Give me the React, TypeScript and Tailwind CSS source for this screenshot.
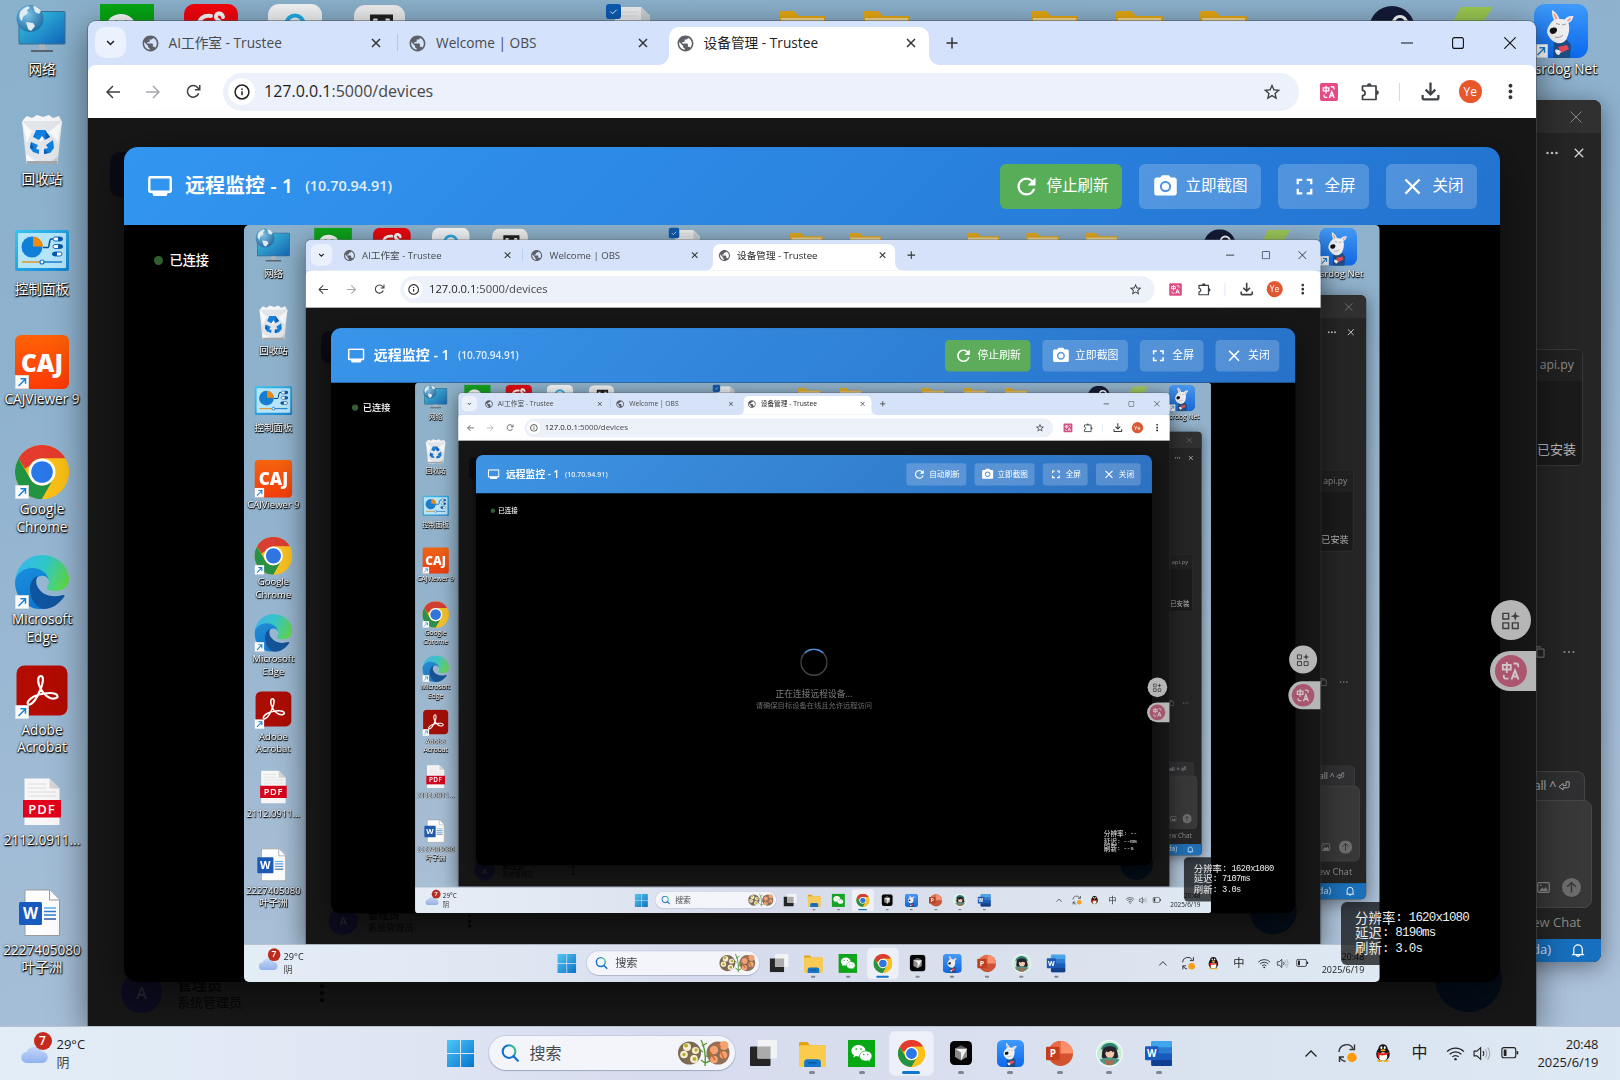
import type { ReactNode } from "react";
import {
  MdPublic,
  MdRefresh,
  MdCameraAlt,
  MdFullscreen,
  MdClose,
  MdStarBorder,
  MdOutlineFileDownload,
  MdMoreVert,
} from "react-icons/md";

/* ---------- app artwork ---------- */

function ChromeLogo({ className }: { className?: string }) {
  return (
    <svg viewBox="0 0 48 48" className={className}>
      <circle cx="24" cy="24" r="24" fill="#fbc116" />
      <path d="M3.2 12 A24 24 0 0 1 44.8 12 H24 A12 12 0 0 0 13.6 18 L9 21Z" fill="#e33b2e" />
      <path d="M3.2 12 A24 24 0 0 0 24 48 L34.4 30 A12 12 0 0 1 13.6 30Z" fill="#229342" />
      <path d="M44.8 12 A24 24 0 0 1 24 48 L34.4 30 A12 12 0 0 0 34.4 18 L24 12Z" fill="#fbc116" />
      <circle cx="24" cy="24" r="12" fill="#fff" />
      <circle cx="24" cy="24" r="9.6" fill="#2a77ea" />
    </svg>
  );
}

function EdgeLogo({ className }: { className?: string }) {
  return (
    <svg viewBox="0 0 54 54" className={className}>
      <defs>
        <linearGradient id="edgeTop" x1="0" y1="0.3" x2="1" y2="0.6">
          <stop offset="0" stopColor="#35b7f0" />
          <stop offset="0.5" stopColor="#2fc6c8" />
          <stop offset="1" stopColor="#5fdc4a" />
        </linearGradient>
        <linearGradient id="edgeMid" x1="0" y1="0" x2="0.5" y2="1">
          <stop offset="0" stopColor="#1c8fdc" />
          <stop offset="1" stopColor="#0a78d2" />
        </linearGradient>
      </defs>
      <path d="M0 27C1 11 13 0 27 0c16 0 27 12 27 24 0 8-6 12-13 12-6 0-9-1-9-3 0-2 2-3 2-6 0-4-4-7-8-7C17 14 6 14 0 27z" fill="url(#edgeTop)" />
      <path d="M0 27c1-9 9-14 17-14 9 0 17 6 17 14 0-4-4-7-8-6-8 1-11 10-8 18 2 7 6 12 12 15-2 .4-4 0-6 0C10 53 0 41 0 27z" fill="url(#edgeMid)" />
      <path d="M15 34c0-6 3-12 8-13-3 4-2 9 1 13 4 6 13 9 24 6 2 0 2 1 1 2-5 7-12 12-20 12C21 53 15 44 15 34z" fill="#0f549e" />
    </svg>
  );
}

function WordTile({ className }: { className?: string }) {
  return (
    <svg viewBox="0 0 26 26" className={className}>
      <rect x="6" y="1" width="20" height="24" rx="1.5" fill="#2b7cd3" />
      <rect x="6" y="1" width="20" height="6" rx="1.5" fill="#41a5ee" />
      <rect x="6" y="13" width="20" height="6" fill="#185abd" />
      <rect x="6" y="19" width="20" height="6" rx="1.5" fill="#103f91" />
      <rect x="0" y="6" width="13" height="13.5" rx="1.2" fill="#185abd" />
      <text x="6.5" y="16" textAnchor="middle" fontSize="9.5" fontWeight="700" fill="#fff">W</text>
    </svg>
  );
}

function PowerPointTile({ className }: { className?: string }) {
  return (
    <svg viewBox="0 0 26 26" className={className}>
      <circle cx="14" cy="13" r="12" fill="#d35230" />
      <path d="M14 1a12 12 0 0 1 12 12H14z" fill="#ff8f6b" />
      <path d="M14 1a12 12 0 0 0-12 12h12z" fill="#ed6c47" />
      <rect x="0" y="6.5" width="13" height="13" rx="1.2" fill="#c43e1c" />
      <text x="6.5" y="16.4" textAnchor="middle" fontSize="9.5" fontWeight="700" fill="#fff">P</text>
    </svg>
  );
}

function WeChatTile({ className }: { className?: string }) {
  return (
    <svg viewBox="0 0 54 54" className={className}>
      <rect width="54" height="54" fill="#06a814" />
      <path d="M21 10c-8 0-14 5-14 11.500 0 4 2 7 5 9l-1.500 4.500 5.500-3c2 .6 3 .8 5 .8 8 0 14-5 14-11.300S29 10 21 10z" fill="#fff" />
      <path d="M35.500 22c-7 0-12.500 4.500-12.500 10s5.500 10 12.500 10c1.500 0 3-.3 4.300-.7l4.700 2.600-1.200-4c2.900-2 4.700-4.700 4.700-7.900 0-5.500-5.500-10-12.500-10z" fill="#fff" stroke="#06a814" strokeWidth="1.300" />
      <circle cx="16.500" cy="18" r="1.700" fill="#06a814" />
      <circle cx="26" cy="18" r="1.700" fill="#06a814" />
      <circle cx="31.500" cy="29" r="1.400" fill="#06a814" />
      <circle cx="39.500" cy="29" r="1.400" fill="#06a814" />
    </svg>
  );
}

function DogTile({ className }: { className?: string }) {
  return (
    <svg viewBox="0 0 54 54" className={className}>
      <defs>
        <linearGradient id="dogBg" x1="0" y1="0" x2="0" y2="1">
          <stop offset="0" stopColor="#3f9bfb" />
          <stop offset="1" stopColor="#0b68ec" />
        </linearGradient>
      </defs>
      <rect width="54" height="54" rx="11" fill="url(#dogBg)" />
      <path d="M19 54l1-17 13-1 4 5-1 13z" fill="#1d4f86" />
      <path d="M18 6c4 2 6 5 7.500 9 2 0 3 0 5 .6 2.500-3 5-4 9-3.600-1 4-3 6-5 7 1.500 6 .5 11-2 16-3 5-8 5-12 3-3-1.500-6-5-7.500-9.500C13 23 17 18 20 16c-1.500-3-2-6-2-10z" fill="#f1f1f3" />
      <path d="M19.500 8.500c2 1.500 3.500 4 4 6.500l-2 .5c-1-2-2-4-2-7zM37.500 13.500c-2 .3-3.500 1.500-4.500 3l1 1.500c1.500-1 2.800-2.500 3.500-4.500z" fill="#f2a28a" />
      <path d="M20 23.500c2-.5 3.500 1 3 3s-2.500 3.500-4.500 3.500-3.500-3-2.500-4.500 2-1.700 4-2z" fill="#111" />
      <path d="M22 19.500l4 1M28 21l4-1M21 33c3 1 6 0 8-2" stroke="#9aa0aa" strokeWidth="1" fill="none" />
      <path d="M24 43l9-2 2 4-8 4z" fill="#e94b56" />
      <path d="M21 46c2-1 5 0 6 2l-2 3c-2 0-4-2-4-5z" fill="#f1f1f3" />
    </svg>
  );
}

function FolderTile({ className }: { className?: string }) {
  return (
    <svg viewBox="0 0 26 26" className={className}>
      <path d="M0 3.500A1.500 1.500 0 0 1 1.500 2H8l2.500 3H24a2 2 0 0 1 2 2v4H0z" fill="#e0a30d" />
      <rect x="0" y="5" width="26" height="21" rx="1.800" fill="#fbcb4c" />
      <path d="M5 26v-4.500A3 3 0 0 1 8 18.500h10a3 3 0 0 1 3 3V26z" fill="#1177cc" />
      <path d="M9 22h8" stroke="#0a4f93" strokeWidth="1.200" />
    </svg>
  );
}

function CursorTile({ className }: { className?: string }) {
  return (
    <svg viewBox="0 0 24 24" className={className}>
      <rect x="1" width="22" height="24" rx="4.500" fill="#050505" />
      <path d="M12 4.500l6 3.300v8.200l-6 3.500-6-3.500V7.800z" fill="#8b8b8b" />
      <path d="M12 4.500l6 3.300-6 3-6-3z" fill="#5c5c5c" />
      <path d="M6 7.800h12l-6 11.700v-8z" fill="#f0f0f0" />
    </svg>
  );
}

function AvatarTile({ className }: { className?: string }) {
  return (
    <svg viewBox="0 0 26 26" className={className}>
      <circle cx="13" cy="13" r="13" fill="#f5faf6" />
      <circle cx="13" cy="13" r="11.800" fill="#c7ead3" />
      <path d="M4.500 9.500c1-5 6-7.500 10-6.500 4 .5 6.500 3 7 6.500L13 7.500z" fill="#2b8070" />
      <path d="M6 10.500c1-3.500 4-4.500 7.500-4.500S20 7.500 20.500 11.500l1 5-3 2H8l-2.500-2z" fill="#26212b" />
      <path d="M9 11c2-1 6-1 8.500 0 .5 3-.5 6-4.200 6.500C10 17 8.500 14 9 11z" fill="#f3c9ad" />
      <path d="M8 9l10-.5-1.500 3.500-2-2-3 2-1.500-1.500L9 13z" fill="#26212b" />
      <path d="M3.500 19c4-3 15-3 19 0-2 3-5 5.300-9.500 5.300S5.500 22 3.500 19z" fill="#4f9488" />
      <path d="M8 18.500l5 1.500 5-1.500-2 5.500h-6z" fill="#a86d4c" />
    </svg>
  );
}

function NetworkTile() {
  return (
    <svg viewBox="0 0 54 54" className="size-[54px]">
      <defs>
        <linearGradient id="netScreen" x1="0" y1="0" x2="1" y2="1">
          <stop offset="0" stopColor="#38c6e0" />
          <stop offset="1" stopColor="#1168bd" />
        </linearGradient>
        <radialGradient id="netGlobe" cx="0.4" cy="0.35" r="0.7">
          <stop offset="0" stopColor="#7cc3e8" />
          <stop offset="1" stopColor="#1f6a9f" />
        </radialGradient>
      </defs>
      <rect x="3.500" y="7" width="47" height="33.500" rx="1.500" fill="#3b6d8c" />
      <rect x="4.500" y="8" width="45" height="31.500" fill="url(#netScreen)" />
      <path d="M24 40.500h6v6h-6z" fill="#a9b3bb" />
      <path d="M16 46h22v2H16z" fill="#59646d" />
      <circle cx="15" cy="14.500" r="13.500" fill="url(#netGlobe)" />
      <path d="M5 8c2-3 5-5 8-6l2 2-3 2 1 3-5 4-1 4c-3-2-3-6-2-9zM18 2c3 0 6 2 8 5l-2 3-4-2zM11 18l7 1 2 3-4 5-3-2z" fill="#dfebf0" />
    </svg>
  );
}

function RecycleTile() {
  return (
    <svg viewBox="0 0 54 54" className="size-[54px]">
      <path d="M8 6l4-4 5 2 5-3 6 2 6-2 4 3 6-2 3 6-1 3H8z" fill="#f3f5f7" />
      <path d="M7 7h40l-4.500 43h-31z" fill="#e2e5e9" />
      <path d="M7 7l10 10-5 12zM47 7L34 18l9 10zM17 17l17 1-8 10zM11 40l14 10h-13z" fill="#f8f9fb" />
      <path d="M42.800 42l-9 8h8.500z" fill="#c8ccd2" />
      <path d="M11.500 47h31l-.3 3h-30.400z" fill="#a3a8ae" />
      <path d="M21 16h9l5 7-5 3-3-4-3 4-6-3zM16 28l7 3-2 4 3 .500v4.500l-6-2-3-4zM38 26l1 8-4 5-6 1v-5l4-1-2-3z" fill="#1080e0" />
      <path d="M30 16l5 7-4 2zM16 28l3 7-4-1zM29 40v-5l4 4z" fill="#0b5cb0" />
    </svg>
  );
}

function ControlPanelTile() {
  return (
    <svg viewBox="0 0 54 54" className="size-[54px]">
      <defs>
        <linearGradient id="cpFrame" x1="0" y1="0" x2="1" y2="1">
          <stop offset="0" stopColor="#36c4f2" />
          <stop offset="1" stopColor="#1484d4" />
        </linearGradient>
      </defs>
      <rect x="0" y="6" width="54" height="41" rx="2" fill="url(#cpFrame)" />
      <rect x="3" y="9" width="48" height="35" rx="1" fill="#b4e6fb" />
      <circle cx="17" cy="23" r="10.500" fill="#0f7fd8" />
      <path d="M18 12.500A10.500 10.500 0 0 1 28 22.500H18z" fill="#f28a0a" />
      <path d="M28 23.500h5c1.500 0 1-8 3-8.500h3" stroke="#0b4f93" strokeWidth="1.500" fill="none" />
      <g stroke="#0f6fc4" fill="#fff">
        <rect x="38" y="13" width="9" height="4" rx="2" />
        <rect x="38" y="20.500" width="9" height="4" rx="2" />
        <rect x="38" y="28" width="9" height="4" rx="2" />
      </g>
      <path d="M43 13h3a2 2 0 0 1 0 4h-3zM43 20.500h3a2 2 0 0 1 0 4h-3zM42 28h-3a2 2 0 0 0 0 4h3z" fill="#0a5aa8" />
      <path d="M7 38h20" stroke="#e48a17" strokeWidth="1.400" />
      <path d="M27 38h20" stroke="#1176cf" strokeWidth="1.400" />
      <circle cx="27" cy="38" r="2" fill="#fff" stroke="#1176cf" strokeWidth="1.200" />
    </svg>
  );
}

function CajTile() {
  return (
    <svg viewBox="0 0 54 54" className="size-[54px]">
      <defs>
        <linearGradient id="caj" x1="0" y1="0" x2="0" y2="1">
          <stop offset="0" stopColor="#ff6206" />
          <stop offset="1" stopColor="#fd3a06" />
        </linearGradient>
      </defs>
      <rect width="54" height="54" rx="6" fill="url(#caj)" />
      <text x="27" y="36.500" textAnchor="middle" fontSize="25" fontWeight="800" fill="#fff" textLength="42" lengthAdjust="spacingAndGlyphs">CAJ</text>
    </svg>
  );
}

function AcrobatTile() {
  return (
    <svg viewBox="0 0 54 54" className="size-[54px]">
      <rect x="1.500" y="0.500" width="51" height="50" rx="8" fill="#b30b00" />
      <path
        d="M26 11c-3 0-3.500 4-2 9 1.500 5 6 11 11 13 4 1.500 8 0 7.500-2-.5-3-7-3.500-13-2.500-7 1-14 4-16.500 8-1 2 0 3.500 2 3 4-1.500 8-9 10.500-15 2-5 4-13 .5-13.500z"
        fill="none"
        stroke="#fff"
        strokeWidth="2.200"
      />
    </svg>
  );
}

function PdfTile() {
  return (
    <svg viewBox="0 0 54 54" className="size-[54px]">
      <path d="M9.500 3.500h25l10 10V50h-35z" fill="#f7f7f7" />
      <path d="M34.500 3.500l10 10h-10z" fill="#d5d5d5" />
      <path d="M13 9h18M13 13h18M13 17h28M13 21h28" stroke="#dcdcdc" />
      <rect x="8" y="25" width="38" height="17.500" fill="#e3001b" />
      <text x="27" y="38.500" textAnchor="middle" fontSize="13" fontWeight="600" letterSpacing="1" fill="#fff">PDF</text>
    </svg>
  );
}

function WordDocTile() {
  return (
    <svg viewBox="0 0 54 54" className="size-[54px]">
      <path d="M10 4h24.500l10 10v35.500H10z" fill="#fdfdfd" stroke="#9b9b9b" />
      <path d="M34.500 4v10h10" fill="#fff" stroke="#9b9b9b" />
      <path d="M29 22h12" stroke="#41a5ee" strokeWidth="1.300" />
      <path d="M29 25.500h12M29 29h12" stroke="#2b7cd3" strokeWidth="1.300" />
      <path d="M29 33h12" stroke="#103f91" strokeWidth="1.300" />
      <rect x="4" y="16" width="23" height="23" rx="1.500" fill="#185abd" />
      <text x="15.500" y="33" textAnchor="middle" fontSize="15.500" fontWeight="700" fill="#fff">W</text>
    </svg>
  );
}

function ShortcutArrow() {
  return (
    <svg viewBox="0 0 14 14" className="absolute bottom-0 left-0 size-[14px]">
      <rect x="0.250" y="0.250" width="13.500" height="13.500" fill="#fdfdfd" stroke="#cfd6dd" strokeWidth="0.500" />
      <path d="M3.500 11l6.500-6.500M5.500 3.800h5v5" stroke="#1683d8" strokeWidth="1.500" fill="none" />
    </svg>
  );
}

function TranslateGlyph({ className, color }: { className?: string; color: string }) {
  return (
    <svg viewBox="0 0 20 20" className={className} fill="none" stroke={color} strokeWidth="1.800">
      <path d="M1.800 4h8v4.500h-8zM5.800 1v11" />
      <path d="M12.500 2.500h2.500q2.300 0 2.300 2.300v1.500M2.800 14v1.500q0 2.200 2.200 2.200h2.500" />
      <path d="M10.500 18.500l3.500-9 3.500 9M11.700 15.500h4.600" strokeWidth="2" />
    </svg>
  );
}

/* ---------- desktop layer ---------- */

const labelShadow = "[text-shadow:0_1px_2px_#000,1px_1px_1px_rgba(0,0,0,.9),0_0_2px_rgba(0,0,0,.6)]";

const desktopItems: { label: ReactNode; icon: ReactNode; shortcut?: boolean }[] = [
  { label: "网络", icon: <NetworkTile /> },
  { label: "回收站", icon: <RecycleTile /> },
  { label: "控制面板", icon: <ControlPanelTile /> },
  { label: "CAJViewer 9", icon: <CajTile />, shortcut: true },
  { label: <>Google<br />Chrome</>, icon: <ChromeLogo className="size-[54px]" />, shortcut: true },
  { label: <>Microsoft<br />Edge</>, icon: <EdgeLogo className="size-[54px]" />, shortcut: true },
  { label: <>Adobe<br />Acrobat</>, icon: <AcrobatTile />, shortcut: true },
  { label: "2112.0911...", icon: <PdfTile /> },
  { label: <>2227405080<br />叶子洲</>, icon: <WordDocTile /> },
];

function DesktopColumn() {
  return (
    <div className="absolute top-[4px] left-0 flex w-[84px] flex-col">
      {desktopItems.map((item, i) => (
        <div key={i} className="flex h-[110.200px] flex-col items-center">
          <div className="relative size-[54px]">
            {item.icon}
            {item.shortcut && <ShortcutArrow />}
          </div>
          <div className={`mt-[1.500px] text-center text-[13.600px] leading-[17.300px] whitespace-nowrap text-white ${labelShadow}`}>
            {item.label}
          </div>
        </div>
      ))}
    </div>
  );
}

function HalfFolder({ className }: { className: string }) {
  return (
    <svg viewBox="0 0 47 20" className={className}>
      <path d="M0 2a2 2 0 0 1 2-2h13l5 5h25a2 2 0 0 1 2 2v13H0z" fill="#e9ab13" />
      <path d="M2 7h43v13H2z" fill="#f6dc94" />
    </svg>
  );
}

function TopRow() {
  return (
    <>
      <WeChatTile className="absolute top-[4px] left-[100px] size-[54px]" />
      <svg viewBox="0 0 54 54" className="absolute top-[4px] left-[184px] size-[54px]">
        <rect width="54" height="54" rx="10" fill="#f6060c" />
        <path d="M27 12c-8-1-12 3-12 9M39 13c-1-4-6-5-7-1-1 5 6 4 5 9" stroke="#fff" strokeWidth="4" fill="none" strokeLinecap="round" />
      </svg>
      <svg viewBox="0 0 54 54" className="absolute top-[4px] left-[268px] size-[54px]">
        <rect width="54" height="54" rx="11" fill="#f4f6f8" />
        <circle cx="27" cy="20" r="8.500" fill="none" stroke="#23b1ee" strokeWidth="4" />
      </svg>
      <svg viewBox="0 0 54 54" className="absolute top-[5px] left-[353px] size-[54px]">
        <rect x="1" width="51" height="52" rx="11" fill="#efefef" />
        <path d="M17 9.500h23v8h-2.500l-1-4h-4v20h-8v-20h-4l-1 4H17z" fill="#222" />
      </svg>
      <svg viewBox="0 0 36 40" className="absolute top-[7px] left-[615px] h-[40px] w-[36px]">
        <path d="M0 0h26l9 9v31H0z" fill="#eef0f1" />
        <path d="M26 0l9 9v4h-9z" fill="#cfd3d6" />
        <path d="M5 5h18M5 9h18" stroke="#dcdfe1" />
      </svg>
      <span className="absolute top-[4px] left-[606px] flex h-[15px] w-[14.500px] items-center justify-center rounded-[3px] bg-[#0a5cb4]">
        <svg viewBox="0 0 10 10" className="size-[9px]" fill="none" stroke="#fff">
          <path d="M1.500 5l2.500 2.500L8.500 3" />
        </svg>
      </span>
      <HalfFolder className="absolute top-[11px] left-[779px] h-[20px] w-[47px]" />
      <HalfFolder className="absolute top-[11px] left-[863px] h-[20px] w-[47px]" />
      <HalfFolder className="absolute top-[11px] left-[1031px] h-[20px] w-[47px]" />
      <HalfFolder className="absolute top-[11px] left-[1116px] h-[20px] w-[47px]" />
      <HalfFolder className="absolute top-[11px] left-[1200px] h-[20px] w-[47px]" />
      <svg viewBox="0 0 46 46" className="absolute top-[6px] left-[1369px] size-[46px]">
        <circle cx="23" cy="23" r="23" fill="#141b38" />
        <circle cx="31" cy="17" r="6.500" fill="none" stroke="#fff" strokeWidth="3" />
      </svg>
      <svg viewBox="0 0 43 20" className="absolute top-[7px] left-[1450px] h-[20px] w-[43px]">
        <path d="M11 0h32L30 20H0z" fill="#9ccb52" />
      </svg>
      <div className="absolute top-[4px] left-[1534px] flex w-[63px] flex-col">
        <div className="relative size-[54px]">
          <DogTile className="size-[54px]" />
          <ShortcutArrow />
        </div>
        <div className={`mt-[2px] flex justify-end text-[13.600px] leading-[17.300px] whitespace-nowrap text-white ${labelShadow}`}>srdog Net</div>
      </div>
    </>
  );
}

function EditorWindow() {
  return (
    <div className="absolute top-[100px] left-[1400px] flex h-[862px] w-[201px] flex-col overflow-hidden rounded-[8px] bg-[#252525] text-[#8d8d8d] shadow-[0_4px_24px_rgba(0,0,0,.45)]">
      <div className="flex h-[33px] shrink-0 items-center justify-end bg-[#303030] pr-[19px]">
        <svg viewBox="0 0 12 12" className="size-[12px]" stroke="#8a8a8a" strokeWidth="1" fill="none"><path d="M.5.5l11 11M11.500.5l-11 11" /></svg>
      </div>
      <div className="flex h-[40px] shrink-0 items-center justify-end gap-[16px] pr-[17px]">
        <svg viewBox="0 0 12 4" className="h-[4px] w-[12px]" fill="#c8c8c8"><circle cx="1.500" cy="2" r="1.300" /><circle cx="6" cy="2" r="1.300" /><circle cx="10.500" cy="2" r="1.300" /></svg>
        <svg viewBox="0 0 10 10" className="size-[10px]" stroke="#d0d0d0" strokeWidth="1.400" fill="none"><path d="M.8.8l8.400 8.400M9.200.8L.8 9.200" /></svg>
      </div>
      <div className="mt-[176px] mr-[18px] flex h-[117px] shrink-0 flex-col overflow-hidden rounded-[6px] border border-[#373737] bg-[#1b1b1b]">
        <div className="flex h-[31px] items-center justify-end gap-[4px] bg-[#212121] pr-[8px] text-[12.300px]"><span>o</span><span>api.py</span></div>
        <div className="mt-[58px] flex justify-end pr-[6px] text-[13px] leading-[20px] text-[#b9b9b9]">已安装</div>
      </div>
      <div className="mt-[178px] flex h-[16px] shrink-0 items-center justify-end gap-[18px] pr-[26px]">
        <svg viewBox="0 0 12 14" className="h-[12px] w-[11px]" stroke="#858585" strokeWidth="1.100" fill="none"><path d="M3 3.500h8.300V13H3zM1 11V1h7" /></svg>
        <svg viewBox="0 0 12 4" className="h-[4px] w-[12px]" fill="#8a8a8a"><circle cx="1.500" cy="2" r="1.100" /><circle cx="6" cy="2" r="1.100" /><circle cx="10.500" cy="2" r="1.100" /></svg>
      </div>
      <div className="mt-[111px] mr-[16px] flex h-[29px] shrink-0 items-center justify-end gap-[2px] rounded-t-[8px] border border-b-0 border-[#454545] bg-[#303032] pr-[14px] text-[12.500px] text-[#b0b0b0]">
        <span className="tracking-[-0.300px]">all ^</span>
        <svg viewBox="0 0 14 12" className="h-[12px] w-[12px]" stroke="#aaa" strokeWidth="1.100" fill="none"><path d="M9.500 1h3.500v5q0 2-2 2H6v2.500L1 6.800 6 3v2.500h3.500z" /></svg>
      </div>
      <div className="mr-[9px] flex h-[108px] shrink-0 items-end justify-end gap-[12px] rounded-tr-[8px] rounded-br-[8px] border border-[#474747] bg-[#383838] pr-[10px] pb-[10px]">
        <svg viewBox="0 0 14 12" className="mb-[4px] h-[11px] w-[13px]"><rect x="0.700" y="0.700" width="12.600" height="10.600" rx="1.500" fill="none" stroke="#8a8a8a" strokeWidth="1.300" /><path d="M2 10l3.500-4 2 2 2-2.500L12 10z" fill="#8a8a8a" /><circle cx="4" cy="3.600" r="1" fill="#8a8a8a" /></svg>
        <svg viewBox="0 0 20 20" className="size-[19px]"><circle cx="10" cy="10" r="10" fill="#6c6c6c" /><path d="M10 15.500V5M5.500 9.300L10 4.800l4.500 4.500" stroke="#353535" strokeWidth="1.500" fill="none" /></svg>
      </div>
      <div className="flex h-[31px] shrink-0 items-center justify-end pr-[20px] pb-px text-[13px]">New Chat</div>
      <div className="flex flex-1 items-center justify-end gap-[20px] bg-[#1670bf] pr-[16px] pb-px text-[13px] text-white/80">
        <span>da)</span>
        <svg viewBox="0 0 14 16" className="h-[15px] w-[14px]" stroke="#fff" strokeWidth="1.300" fill="none"><path d="M2.500 11.500V6.500a4.500 4.500 0 0 1 9 0v5l1 1h-11zM5 13q2 2.500 4 0" /></svg>
      </div>
    </div>
  );
}

/* ---------- browser window ---------- */

function CloseX({ className }: { className?: string }) {
  return (
    <svg viewBox="0 0 10 10" className={className} stroke="#333" strokeWidth="1.500" fill="none">
      <path d="M1 1l8 8M9 1L1 9" />
    </svg>
  );
}

function Tab({ title, active }: { title: string; active?: boolean }) {
  return (
    <div className={`relative flex h-[38px] w-[260px] shrink-0 items-start rounded-t-[10px] pt-[8px] pr-[13px] pl-[8.500px] ${active ? "bg-white" : ""}`}>
      {active && (
        <>
          <span className="absolute bottom-0 left-[-10px] size-[10px] bg-[radial-gradient(circle_at_0_0,#d4e2fc_9.500px,#fff_10px)]" />
          <span className="absolute right-[-10px] bottom-0 size-[10px] bg-[radial-gradient(circle_at_100%_0,#d4e2fc_9.500px,#fff_10px)]" />
        </>
      )}
      <MdPublic className="mt-[-1.500px] ml-[-1.500px] size-[19px] shrink-0 text-[#5d6167]" />
      <span className={`mt-[-2px] ml-[9px] flex-1 text-[13.700px] leading-[20px] whitespace-nowrap ${active ? "text-[#1f1f1f]" : "text-[#484a4e]"}`}>{title}</span>
      <CloseX className="mt-[3px] size-[10px]" />
    </div>
  );
}

function TabStrip() {
  return (
    <div className="flex h-[44px] shrink-0 items-start bg-[#d4e2fc] pt-[6px] pl-[7px]">
      <div className="flex h-[31px] w-[31px] items-center justify-center rounded-[10px] bg-[#ebf1fd]">
        <svg viewBox="0 0 10 7" className="h-[6px] w-[9px]" stroke="#1f1f1f" strokeWidth="1.800" fill="none"><path d="M1 1.200l4 4 4-4" /></svg>
      </div>
      <div className="ml-[7.500px] flex">
        <Tab title="AI工作室 - Trustee" />
        <span className="mt-[7px] mr-[3px] ml-[3px] h-[17px] w-[1.500px] bg-[#a8c7fa]" />
        <Tab title="Welcome | OBS" />
        <span className="w-[7.500px]" />
        <Tab title="设备管理 - Trustee" active />
      </div>
      <svg viewBox="0 0 12 12" className="mt-[10px] ml-[17px] size-[12px]" stroke="#333" strokeWidth="1.500"><path d="M6 .5v11M.5 6h11" /></svg>
      <div className="mt-[10px] mr-[20px] ml-auto flex items-center gap-[39.500px]">
        <svg viewBox="0 0 12 12" className="size-[12px]" stroke="#111" strokeWidth="1.100"><path d="M0 6h12" /></svg>
        <svg viewBox="0 0 12 12" className="size-[12px]" stroke="#111" strokeWidth="1.100" fill="none"><rect x="0.600" y="0.600" width="10.800" height="10.800" rx="2" /></svg>
        <svg viewBox="0 0 12 12" className="size-[12px]" stroke="#111" strokeWidth="1.100"><path d="M.3.3l11.400 11.400M11.700.3L.3 11.700" /></svg>
      </div>
    </div>
  );
}

function Toolbar() {
  return (
    <div className="shrink-0 bg-[#d4e2fc]">
      <div className="flex h-[53px] items-center rounded-t-[8px] bg-white pl-[17.500px]">
        <svg viewBox="0 0 14 14" className="size-[14px]" stroke="#3c4043" strokeWidth="1.500" fill="none"><path d="M14 7H1M7 1L1 7l6 6" /></svg>
        <svg viewBox="0 0 14 14" className="ml-[26px] size-[14px]" stroke="#a5a7aa" strokeWidth="1.500" fill="none"><path d="M0 7h13M7 1l6 6-6 6" /></svg>
        <svg viewBox="0 0 16 16" className="ml-[26px] size-[15px]" stroke="#3c4043" strokeWidth="1.600" fill="none"><path d="M13.500 10A6.200 6.200 0 1 1 12.600 4L14.500 6M14.700 1v5.200H9.500" /></svg>
        <div className="ml-[22px] flex h-[38px] w-[1076px] items-center rounded-full bg-[#ecf1fb] pr-[17px] pl-[5.500px]">
          <span className="flex size-[27px] items-center justify-center rounded-full bg-white">
            <svg viewBox="0 0 16 16" className="size-[16px]" stroke="#222" strokeWidth="1.500" fill="none"><circle cx="8" cy="8" r="6.900" /><path d="M8 7.200v4M8 4.500v1.500" /></svg>
          </span>
          <span className="ml-[9px] pb-px text-[16px] text-[#474747]">
            <span className="text-[#1f1f1f]">127.0.0.1</span>:5000/devices
          </span>
          <MdStarBorder className="ml-auto size-[20px] text-[#3c4043]" />
        </div>
        <span className="ml-[21px] flex h-[18px] w-[18px] items-center justify-center rounded-[2px] bg-[#e64a86]">
          <TranslateGlyph className="size-[14px]" color="#fff" />
        </span>
        <svg viewBox="0 0 20 20" className="ml-[22px] size-[20px]" fill="none" stroke="#3c4043" strokeWidth="1.700" strokeLinejoin="round">
          <path d="M2.500 4h13.500v13.500H2.500v-4a2.600 2.600 0 0 0 0-5.200z" />
          <path d="M7.200 3.500a2.100 2.100 0 0 1 4.200 0zM16.500 8.500a2.100 2.100 0 0 1 0 4.200z" fill="#3c4043" strokeWidth="0.500" />
        </svg>
        <span className="ml-[19px] h-[18px] w-[1.500px] bg-[#c9dcfb]" />
        <MdOutlineFileDownload className="ml-[16.500px] size-[27px] text-[#3c4043]" />
        <span className="ml-[15.500px] flex size-[22.500px] items-center justify-center rounded-full bg-[#e8562c] text-[12px] text-white">Ye</span>
        <MdMoreVert className="ml-[17.500px] size-[23px] text-[#333]" />
      </div>
    </div>
  );
}

/* ---------- remote monitor dialog ---------- */

function HeaderButton({ icon, label, green }: { icon: ReactNode; label: string; green?: boolean }) {
  return (
    <div className={`flex h-[45px] items-center gap-[6.500px] rounded-[6px] pr-[13.500px] pl-[13px] text-[15.500px] text-white ${green ? "bg-[#58ae58]" : "bg-white/20"}`}>
      <span className="text-[27px]">{icon}</span>
      {label}
    </div>
  );
}

function StatusLine({ name, value }: { name: string; value: string }) {
  return (
    <div className="flex h-[15.300px] items-center whitespace-pre">
      <span className="text-[13.400px] leading-none">{name}</span>
      <span className="font-['Liberation_Mono',monospace] text-[12.500px] leading-none tracking-[-0.800px]">{`: ${value}`}</span>
    </div>
  );
}

const readouts = [
  { size: "1620x1080", delay: "8190ms", refresh: "3.0s" },
  { size: "1620x1080", delay: "7107ms", refresh: "3.0s" },
  { size: "--", delay: "--ms", refresh: "--s" },
];

function RemoteDialog({ level }: { level: number }) {
  const connecting = level === 2;
  const data = readouts[level];
  return (
    <div className="relative mt-[29px] ml-[36px] flex h-[835px] w-[1376px] flex-col overflow-hidden rounded-[14px] bg-black shadow-[0_10px_40px_rgba(0,0,0,.5)]">
      <div className="flex h-[78px] shrink-0 items-center bg-[linear-gradient(135deg,#3296f1_0%,#2373d0_100%)] pr-[23px] pl-[24px] text-white">
        <svg viewBox="0 0 24 21" className="h-[21px] w-[24px]" fill="none" stroke="#fff" strokeWidth="2.400">
          <rect x="1.300" y="1.300" width="21.400" height="14.400" rx="1" />
          <path d="M4.500 15.500h15v2.300l-1 2.200h-13l-1-2.200z" fill="#fff" stroke="none" />
        </svg>
        <span className="ml-[13px] text-[20px] font-semibold">远程监控 - 1</span>
        <span className="ml-[12px] text-[14.400px] font-semibold text-white/85">(10.70.94.91)</span>
        <div className="ml-auto flex gap-[17px]">
          <HeaderButton icon={<MdRefresh />} label={connecting ? "自动刷新" : "停止刷新"} green={!connecting} />
          <HeaderButton icon={<MdCameraAlt />} label="立即截图" />
          <HeaderButton icon={<MdFullscreen />} label="全屏" />
          <HeaderButton icon={<MdClose />} label="关闭" />
        </div>
      </div>

      <div className="flex flex-1 justify-center">
        {connecting ? (
          <div className="flex flex-col items-center pt-[316px]">
            <svg viewBox="0 0 56 56" className="size-[56px]" fill="none" strokeWidth="3">
              <circle cx="28" cy="28" r="26.500" stroke="#424242" />
              <path d="M9.300 9.300a26.500 26.500 0 0 1 37.400 0" stroke="#3a93ea" />
            </svg>
            <p className="mt-[22px] text-[17.800px] leading-[26px] text-[#808080]">正在连接远程设备...</p>
            <p className="text-[14.800px] leading-[22px] text-[#6c6c6c]">请确保目标设备在线且允许远程访问</p>
          </div>
        ) : (
          <div className="h-[757px] w-[1135.500px] overflow-hidden rounded-[5px]">
            <div className="h-[1080px] w-[1620px] origin-top-left scale-[0.70093] saturate-[0.93]">
              <Desktop level={level + 1} />
            </div>
          </div>
        )}
      </div>

      <div className="absolute top-[104px] left-[30px] flex items-center gap-[6.500px] text-[13.200px] font-medium text-white">
        <span className="size-[9px] rounded-full bg-[#2f5f31]" />
        已连接
      </div>
      <div className="absolute right-[17px] bottom-[17px] rounded-[6px] bg-black/70 px-[14px] py-[8.500px] text-[#eee]">
        <StatusLine name="分辨率" value={data.size} />
        <StatusLine name="延迟" value={data.delay} />
        <StatusLine name="刷新" value={data.refresh} />
      </div>
    </div>
  );
}

function BrowserWindow({ level }: { level: number }) {
  return (
    <div className="absolute top-[21px] left-[88px] flex h-[1005px] w-[1447.500px] flex-col overflow-hidden rounded-t-[8px] shadow-[0_0_0_1px_rgba(70,80,90,.5),0_8px_36px_rgba(0,0,0,.5)]">
      <TabStrip />
      <Toolbar />
      <div className="relative flex flex-1 items-start bg-[#171717]">
        <span className="absolute top-[34px] left-[22px] h-[45px] w-[45px] rounded-[10px] bg-[#0b0b16]" />
        <div className="absolute bottom-[13px] left-[33px] flex items-center">
          <span className="flex size-[41px] items-center justify-center rounded-full bg-[#0c0c20] text-[16px] font-semibold text-[#26262f]">A</span>
          <div className="ml-[15px] leading-[18px] text-[#060606]">
            <div className="text-[15px] font-semibold">管理员</div>
            <div className="text-[13px]">系统管理员</div>
          </div>
          <MdMoreVert className="ml-[66px] size-[28px] text-[#060606]" />
        </div>
        <span className="absolute right-[34px] bottom-[14px] size-[67px] rounded-full bg-[#030c18]" />
        <RemoteDialog level={level} />
        <div className="absolute top-[482px] right-0 flex flex-col items-end gap-[11px]">
          <span className="mr-[5px] flex size-[40px] items-center justify-center rounded-full bg-[#b6b6b6]">
            <svg viewBox="0 0 20 20" className="size-[19px]" fill="none" stroke="#3e3e3e" strokeWidth="1.500">
              <path d="M2 2.500h6v6H2zM2 12.500h6v6H2zM12 12.500h6v6h-6z" />
              <path d="M15 .5l1.200 3.800L20 5.500l-3.800 1.200L15 10.500l-1.200-3.800L10 5.500l3.800-1.200z" fill="#3e3e3e" stroke="none" />
            </svg>
          </span>
          <span className="flex h-[40px] w-[46px] items-center rounded-l-full bg-[#b6b6b6] pl-[5.500px]">
            <span className="flex size-[32px] items-center justify-center rounded-full bg-[#ab556e]">
              <TranslateGlyph className="size-[20px]" color="#cfc5c8" />
            </span>
          </span>
        </div>
      </div>
    </div>
  );
}

/* ---------- taskbar ---------- */

function TaskApp({ children, state }: { children?: ReactNode; state?: "open" | "active" }) {
  return (
    <div className={`relative flex h-[43px] w-[43px] items-center justify-center rounded-[5px] ${state === "active" ? "bg-[#edf0f8] shadow-[0_0_0_1px_rgba(255,255,255,.4)]" : ""}`}>
      {children}
      {state === "open" && <span className="absolute bottom-[1px] h-[3px] w-[6px] rounded-full bg-[#808690]" />}
      {state === "active" && <span className="absolute bottom-[1px] h-[3px] w-[18px] rounded-full bg-[#0f76cf]" />}
    </div>
  );
}

function FoodArt() {
  return (
    <svg viewBox="0 0 52 28" className="h-[28px] w-[52px]">
      <circle cx="11.500" cy="14" r="11.500" fill="#7d6a52" />
      <circle cx="40" cy="14" r="11.500" fill="#8d6f58" />
      <g fill="#f6edd0">
        <circle cx="9" cy="8" r="4" /><circle cx="17.500" cy="11.500" r="3.600" /><circle cx="6" cy="15.500" r="3.800" /><circle cx="16" cy="20" r="3.900" />
      </g>
      <g fill="#b9ae2d">
        <circle cx="8" cy="6.500" r="2" /><circle cx="18" cy="11" r="1.700" /><circle cx="6" cy="15.500" r="1.700" /><circle cx="16.500" cy="20" r="2" />
      </g>
      <g fill="#f5a26f">
        <circle cx="46" cy="6.500" r="4.500" /><circle cx="36" cy="11" r="4.200" /><circle cx="45.500" cy="16" r="3.800" /><circle cx="36" cy="20.500" r="3.800" />
      </g>
      <path d="M42 11l4 9M32 13l5 8M38 5l5 3" stroke="#d2672f" strokeWidth="1.500" />
      <path d="M23 1c4 7 5 16 4 26M24 7l5-3M25 13l-4-3M27 18l5-3M27 24l-4-3M27 24l5-2" stroke="#579a37" strokeWidth="1.400" fill="none" />
    </svg>
  );
}

function Taskbar() {
  return (
    <div className="absolute bottom-0 left-0 flex h-[54px] w-[1620px] items-center border-t border-[#b9c2cf] bg-[linear-gradient(90deg,#e2edf7_0%,#dfe6f3_25%,#d7dbee_40%,#d9e0ee_65%,#dde9f4_100%)] pb-px text-[#1c1c1c]">
      <div className="relative ml-[21px] h-[30px] w-[29px]">
        <svg viewBox="0 0 28 20" className="absolute top-[6px] left-0 h-[20px] w-[28px]">
          <defs>
            <linearGradient id="cloud" x1="0" y1="0" x2="0" y2="1">
              <stop offset="0" stopColor="#c6d6f8" />
              <stop offset="1" stopColor="#8fb2f0" />
            </linearGradient>
          </defs>
          <path d="M6 19a5.500 5.500 0 0 1-.5-11A8.500 8.500 0 0 1 21 7.500 5.800 5.800 0 0 1 22 19z" fill="url(#cloud)" />
        </svg>
        <span className="absolute top-[-6px] left-[12.500px] flex size-[18px] items-center justify-center rounded-full bg-[#c42b1c] text-[12px] font-semibold text-white">7</span>
      </div>
      <div className="ml-[6.500px] w-[45px] text-[13px] leading-[18px]">
        <div>29°C</div>
        <div className="text-[#444]">阴</div>
      </div>
      <svg viewBox="0 0 27 27" className="ml-[345px] size-[27px]">
        <defs>
          <linearGradient id="win" x1="0" y1="0" x2="1" y2="1">
            <stop offset="0" stopColor="#4cc9f6" />
            <stop offset="1" stopColor="#0573d0" />
          </linearGradient>
        </defs>
        <path d="M0 0h13v13H0zM14 0h13v13H14zM0 14h13v13H0zM14 14h13v13H14z" fill="url(#win)" />
      </svg>
      <div className="ml-[15.500px] flex h-[34px] w-[245.500px] items-center rounded-full bg-[#f4f5fb] pr-[5px] pl-[11.500px] shadow-[0_1px_1px_rgba(90,100,130,.35),0_0_0_1px_rgba(150,160,190,.25)]">
        <svg viewBox="0 0 19 19" className="size-[18px]" fill="none" strokeWidth="2.200">
          <defs>
            <linearGradient id="mag" x1="0.200" y1="0.600" x2="1" y2="0.200">
              <stop offset="0.350" stopColor="#0f6fd0" />
              <stop offset="1" stopColor="#3bcf86" />
            </linearGradient>
          </defs>
          <circle cx="8.500" cy="8" r="6.700" stroke="url(#mag)" />
          <path d="M13.300 13l4.500 4.700" stroke="#0f6fd0" strokeLinecap="round" />
        </svg>
        <span className="ml-[11px] flex-1 text-[16px] text-[#4a4a4e]">搜索</span>
        <FoodArt />
      </div>
      <div className="ml-[7px] flex gap-[6.450px]">
        <TaskApp>
          <svg viewBox="0 0 27 26" className="h-[26px] w-[27px]">
            <rect x="0" y="6.500" width="20.500" height="19.500" rx="1" fill="#252525" />
            <rect x="7.500" y="0" width="19.500" height="18.500" rx="1" fill="#f3f3f5" opacity="0.950" />
            <rect x="7.500" y="6.500" width="13" height="12" fill="#ababab" />
          </svg>
        </TaskApp>
        <TaskApp state="open"><FolderTile className="size-[27px]" /></TaskApp>
        <TaskApp state="open"><WeChatTile className="size-[27px]" /></TaskApp>
        <TaskApp state="active"><ChromeLogo className="size-[27px]" /></TaskApp>
        <TaskApp state="open"><CursorTile className="size-[24px]" /></TaskApp>
        <TaskApp state="open"><DogTile className="size-[27px]" /></TaskApp>
        <TaskApp state="open"><PowerPointTile className="size-[27px]" /></TaskApp>
        <TaskApp state="open"><AvatarTile className="size-[27px]" /></TaskApp>
        <TaskApp state="open"><WordTile className="size-[27px]" /></TaskApp>
      </div>
      <div className="mr-[21.500px] ml-auto flex items-center">
        <svg viewBox="0 0 12 7" className="h-[7px] w-[12px]" stroke="#222" strokeWidth="1.300" fill="none"><path d="M.5 6.500L6 1l5.500 5.500" /></svg>
        <svg viewBox="0 0 20 20" className="ml-[20px] size-[20px]" stroke="#333" strokeWidth="1.400" fill="none">
          <path d="M2 9a7.500 7.500 0 0 1 14-3.500M17.500 1.500v5h-5M2.500 19v-5h4.500M2.500 14a8 8 0 0 0 6 4.500" />
          <circle cx="15" cy="14.500" r="4.700" fill="#ff9a0a" stroke="none" />
        </svg>
        <svg viewBox="0 0 16 18" className="ml-[18px] h-[18px] w-[16px]">
          <ellipse cx="8" cy="10" rx="6.800" ry="7" fill="#151515" />
          <circle cx="8" cy="4.800" r="4.600" fill="#151515" />
          <ellipse cx="8" cy="12.500" rx="4.300" ry="4.300" fill="#fff" />
          <ellipse cx="6.300" cy="3.700" rx="1" ry="1.400" fill="#fff" />
          <ellipse cx="9.700" cy="3.700" rx="1" ry="1.400" fill="#fff" />
          <ellipse cx="8" cy="6.300" rx="2.600" ry="1" fill="#f5a90b" />
          <path d="M2.500 8q5.500 2.500 11 0v2q-5.500 2.300-9 1v3H3z" fill="#e2231a" />
          <ellipse cx="4.800" cy="17" rx="2.700" ry="1" fill="#f5a90b" />
          <ellipse cx="11.200" cy="17" rx="2.700" ry="1" fill="#f5a90b" />
        </svg>
        <span className="ml-[20px] pb-[2px] text-[16px] leading-none">中</span>
        <svg viewBox="0 0 20 16" className="ml-[19px] h-[15px] w-[19px]" stroke="#222" strokeWidth="1.300" fill="none">
          <path d="M1 6a12.500 12.500 0 0 1 18 0M3.800 8.800a8.700 8.700 0 0 1 12.400 0M6.600 11.600a4.800 4.800 0 0 1 6.800 0" />
          <circle cx="10" cy="14" r="1.300" fill="#222" stroke="none" />
        </svg>
        <svg viewBox="0 0 20 16" className="ml-[8px] h-[15px] w-[19px]" stroke="#222" strokeWidth="1.200" fill="none">
          <path d="M1 5.500h3l4-3.700v12.400l-4-3.700H1zM10.500 5.500q1.800 2.500 0 5" />
          <path d="M13 3.500q3 4.500 0 9M15.500 1.500q4.500 6.500 0 13" stroke="#a3a9b3" />
        </svg>
        <svg viewBox="0 0 19 13" className="ml-[9px] h-[12px] w-[18px]" stroke="#222" strokeWidth="1.200" fill="none">
          <rect x="0.700" y="0.700" width="15" height="11" rx="2.200" />
          <rect x="2.700" y="2.700" width="3" height="7" rx="0.500" fill="#222" stroke="none" />
          <path d="M17.500 4.500v3.500" strokeWidth="1.800" />
        </svg>
        <div className="ml-[18px] pb-px text-right text-[12.900px] leading-[18px]">
          <div>20:48</div>
          <div>2025/6/19</div>
        </div>
      </div>
    </div>
  );
}

function Desktop({ level }: { level: number }) {
  return (
    <div className="relative h-[1080px] w-[1620px] overflow-hidden bg-[linear-gradient(170deg,#8ab1cc_0%,#8fb2cf_30%,#a0bbd5_60%,#afc4dd_100%)]">
      <DesktopColumn />
      <TopRow />
      <EditorWindow />
      <BrowserWindow level={level} />
      <Taskbar />
    </div>
  );
}

export default function App() {
  return (
    <div className="h-[1080px] w-[1620px] overflow-hidden font-['Open_Sans','Noto_Sans_CJK_SC',sans-serif]">
      <Desktop level={0} />
    </div>
  );
}
